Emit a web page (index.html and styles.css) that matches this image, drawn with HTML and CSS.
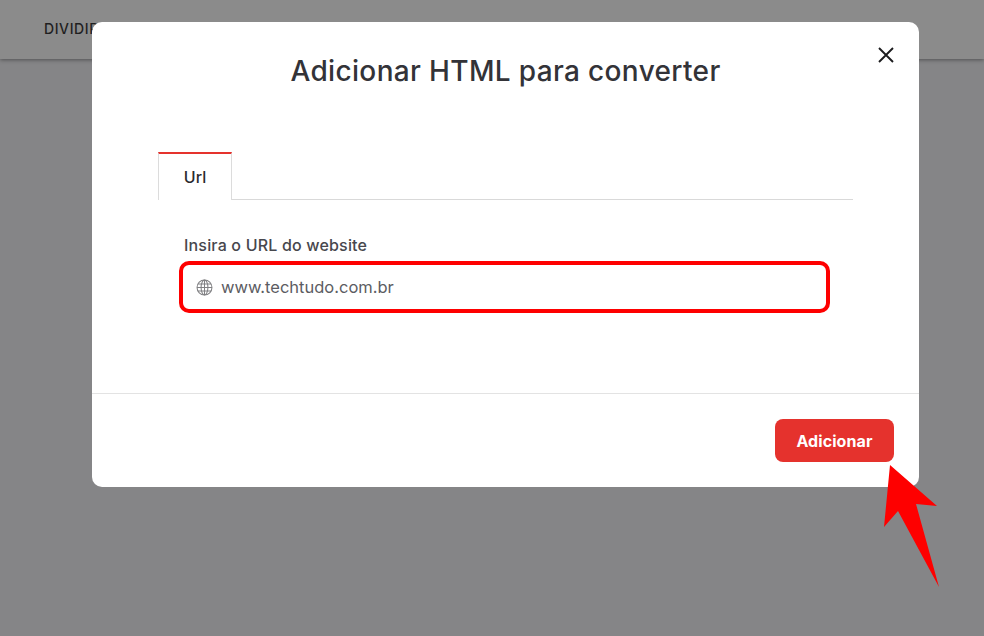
FILE: index.html
```html
<!DOCTYPE html>
<html>
    <head>
        <meta charset="utf-8">
        <title>Adicionar HTML para converter</title>
        <link rel="stylesheet" href="styles.css">
    </head>
    <body>
        <div class="topo">
            <span class="topo-item">DIVIDIR</span>
        </div>
        <div class="modal">
            <button class="fechar">
                <svg width="16" height="16" viewBox="0 0 16 16">
                    <path d="M1 1L15 15M15 1L1 15" stroke="#1c1c1e" stroke-width="1.9" fill="none"/>
                </svg>
            </button>
            <h1 class="titulo">Adicionar HTML para converter</h1>
            <div class="abas">
                <div class="aba">Url</div>
            </div>
            <div class="campo">
                <label class="rotulo">Insira o URL do website</label>
                <div class="entrada">
                    <svg class="globo" width="17" height="17" viewBox="0 0 18 18">
                        <g stroke="#808083" stroke-width="1.1" fill="none">
                            <circle cx="9" cy="9" r="7.9"/>
                            <ellipse cx="9" cy="9" rx="3.6" ry="7.9"/>
                            <path d="M9 1.1V16.9M1.1 9H16.9M2.2 5.2H15.8M2.2 12.8H15.8"/>
                        </g>
                    </svg>
                    <span>www.techtudo.com.br</span>
                </div>
            </div>
            <div class="rodape">
                <button class="adicionar">Adicionar</button>
            </div>
        </div>
        <svg class="seta" width="984" height="636" viewBox="0 0 984 636">
            <polygon points="890,465 937,506 916,504 939,587 898,511 884,527" fill="#fe0000"/>
        </svg>
    </body>
</html>
```

FILE: styles.css
```css
html, body {
    margin: 0;
    height: 100%;
}
body {
    background-color: #858587;
    font-family: Inter, "Liberation Sans", sans-serif;
    overflow: hidden;
}
.topo {
    height: 59px;
    background-color: #8b8b8b;
    box-shadow: 0 1px 4px rgba(0, 0, 0, 0.4);
    display: flex;
    align-items: center;
    padding-left: 44px;
    padding-bottom: 3px;
    box-sizing: border-box;
}
.topo-item {
    font-size: 14px;
    font-weight: 500;
    letter-spacing: 0.6px;
    color: #1f1f21;
}
.modal {
    position: absolute;
    left: 92px;
    top: 22px;
    width: 827px;
    height: 465px;
    background-color: white;
    border-radius: 10px;
    display: flex;
    flex-direction: column;
}
.fechar {
    position: absolute;
    right: 25px;
    top: 25px;
    padding: 0;
    border: none;
    background: none;
    line-height: 0;
}
.titulo {
    margin: 31px 0 0 0;
    font-size: 28px;
    line-height: 36px;
    font-weight: 500;
    letter-spacing: 0.35px;
    text-align: center;
    color: #333338;
}
.abas {
    margin: 63px 66px 0 66px;
    border-bottom: 1px solid #d9d9d9;
    display: flex;
    height: 47px;
}
.aba {
    width: 74px;
    height: 48px;
    box-sizing: border-box;
    margin-bottom: -1px;
    border-top: 2.5px solid #e5322d;
    border-left: 1px solid #dcdcdc;
    border-right: 1px solid #dcdcdc;
    background-color: white;
    display: flex;
    align-items: center;
    justify-content: center;
    font-size: 16px;
    font-weight: 500;
    color: #2a2a2e;
}
.campo {
    margin: 35px 89px 0 87px;
}
.rotulo {
    display: block;
    margin-left: 5px;
    font-size: 16px;
    line-height: 20px;
    font-weight: 500;
    letter-spacing: 0.18px;
    color: #47474d;
}
.entrada {
    margin-top: 6px;
    height: 52px;
    box-sizing: border-box;
    border: 4.5px solid #fe0000;
    border-radius: 10px;
    display: flex;
    align-items: center;
    gap: 8px;
    padding-left: 13px;
    font-size: 16.5px;
    color: #5c5c62;
}
.rodape {
    margin-top: 80px;
    border-top: 1px solid #e3e3e3;
    flex: 1;
    display: flex;
    justify-content: flex-end;
    padding: 25px 25px 0 0;
}
.adicionar {
    width: 119px;
    height: 43px;
    background-color: #e5322d;
    color: white;
    border: none;
    border-radius: 8px;
    font-family: inherit;
    font-size: 16px;
    font-weight: 700;
    letter-spacing: 0.1px;
}
.seta {
    position: absolute;
    left: 0;
    top: 0;
}
```
